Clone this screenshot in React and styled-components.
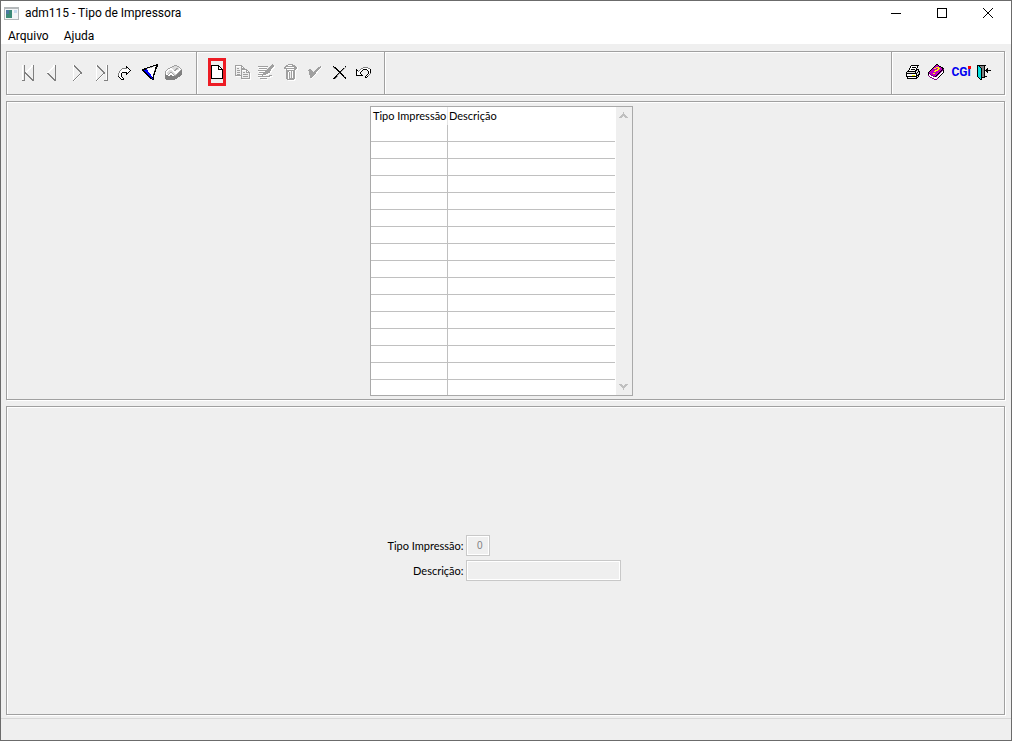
import React from "react";
import styled, { createGlobalStyle } from "styled-components";

const GlobalStyle = createGlobalStyle`
  * {
    box-sizing: border-box;
  }
  body {
    margin: 0;
    background: #efefef;
    font-family: Roboto, "Open Sans", sans-serif;
    font-size: 12px;
    color: #000;
  }
`;
const Window = styled.div`
  min-height: 100vh;
  display: flex;
  flex-direction: column;
  background: #efefef;
  border: 1px solid #6b6b6b;
`;
const TitleBar = styled.header`
  display: flex;
  align-items: center;
  height: 24px;
  padding-left: 3px;
  background: #fff;
`;
const Title = styled.h1`
  flex: 1;
  margin: 0 0 0 6px;
  font-size: 12px;
  font-weight: normal;
`;
const WindowButton = styled.button`
  display: flex;
  align-items: center;
  justify-content: center;
  width: 46px;
  height: 24px;
  padding: 0;
  border: none;
  background: none;
`;
const MenuBar = styled.nav`
  display: flex;
  gap: 1px;
  height: 19px;
  background: #fff;
`;
const MenuItem = styled.button`
  padding: 2px 7px 0;
  border: none;
  background: none;
  font: inherit;
  line-height: 18px;
`;
const Content = styled.main`
  flex: 1;
  display: flex;
  flex-direction: column;
  gap: 6px;
  padding: 7px 6px 3px 5px;
`;
const Frame = styled.section`
  border: 1px solid #a0a0a0;
  box-shadow: 1px 1px #fff, inset 1px 1px #fff;
`;
const ToolBar = styled(Frame)`
  display: flex;
  height: 44px;
`;
const ToolGroup = styled.div`
  display: flex;
  align-items: center;
  padding: 0 ${props => props.$end || 12}px 2px ${props => props.$start || 9}px;
  border-right: ${props => (props.$last ? "none" : "1px solid #a0a0a0")};
  box-shadow: inset 1px 1px #fff;
`;
const ToolSpacer = styled(ToolGroup)`
  flex: 1;
`;
const ToolButton = styled.button`
  display: flex;
  align-items: center;
  justify-content: center;
  width: 24px;
  height: 28px;
  padding: 0;
  border: none;
  background: none;
`;
const NewButton = styled(ToolButton)`
  width: 18px;
  margin: 0 3px;
  border: 3px solid #ed1c24;
`;
const CgiButton = styled(ToolButton)`
  position: relative;
  color: #0000f0;
  font: bold 12px Roboto, sans-serif;
  &::after {
    content: "";
    position: absolute;
    top: 8px;
    right: 2px;
    width: 3px;
    height: 3px;
    background: #f00;
  }
`;
const GridPanel = styled(Frame)`
  display: flex;
  justify-content: center;
  padding: 4px 8px 3px 0;
`;
const GridBox = styled.div`
  display: flex;
  border: 1px solid #a9a9a9;
  background: #fff;
`;
const Grid = styled.table`
  width: 244px;
  margin-right: 1px;
  table-layout: fixed;
  border-collapse: separate;
  border-spacing: 0;
`;
const HeadCell = styled.th`
  width: ${props => props.$width || "auto"};
  height: 18px;
  padding: 0 0 0 ${props => (props.$first ? 2 : 1)}px;
  border-right: ${props => (props.$first ? "1px solid #e5e5e5" : "none")};
  font: 11px Lato, sans-serif;
  line-height: 18px;
  text-align: left;
  white-space: nowrap;
`;
const Cell = styled.td`
  height: 17px;
  padding: 0;
  border-right: ${props => (props.$first ? "1px solid #c0c0c0" : "none")};
  border-bottom: 1px solid #c0c0c0;
  tr:last-child > & {
    height: 15px;
    border-bottom: none;
  }
`;
const ScrollBar = styled.div`
  display: flex;
  flex-direction: column;
  justify-content: space-between;
  width: 16px;
  background: #efefef;
`;
const ScrollButton = styled.button`
  height: 17px;
  padding: 0 0 0 3px;
  border: none;
  background: none;
  line-height: 0;
  text-align: left;
`;
const FormPanel = styled(Frame)`
  flex: 1;
  display: flex;
  align-items: center;
  justify-content: center;
  padding: 0 3px 6px 0;
`;
const Form = styled.form`
  display: grid;
  grid-template-columns: auto 155px;
  gap: 4px 2px;
  align-items: center;
  font: 11px Lato, sans-serif;
`;
const Label = styled.label`
  text-align: right;
`;
const Field = styled.input`
  width: ${props => props.$width || "100%"};
  height: 21px;
  padding: 0 6px;
  border: 1px solid #c8c8c8;
  box-shadow: inset 0 0 0 1px #fff;
  background: #efefef;
  color: #808080;
  font: 10px "Liberation Sans", Arial, sans-serif;
  text-align: right;
`;
const StatusBar = styled.footer`
  height: 22px;
  border-top: 1px solid #d7d7d7;
`;

const Icon = ({ children, width = 20, height = 18 }) => (
  <svg
    width={width}
    height={height}
    viewBox={`0 0 ${width} ${height}`}
    fill="none"
    shapeRendering="crispEdges"
    aria-hidden="true"
  >
    {children}
  </svg>
);

const COLORS = {
  k: "#000",
  w: "#fff",
  g: "#a0a0a0",
  d: "#808080",
  l: "#dcdcdc",
  m: "#c000c0",
  p: "#800080",
  y: "#ffff00",
  c: "#00e0e0",
  b: "#0000ff"
};

// one character per pixel, "." is transparent
const Pixels = ({ rows, x = 0, y = 0 }) =>
  rows.map((row, r) =>
    [...row].map((ch, c) =>
      COLORS[ch] ? (
        <rect
          key={`${r}-${c}`}
          x={x + c}
          y={y + r}
          width="1"
          height="1"
          fill={COLORS[ch]}
        />
      ) : null
    )
  );

const FIRST = [
  "w.d......wwd",
  "w.d......wwd",
  "w.d.....ww.d",
  "w.d....ww..d",
  "w.d...ww...d",
  "w.d..ww....d",
  "w.d.ww.....d",
  "w.ddw......d",
  "w.ddd......d",
  "w.d.dd.....d",
  "w.d..dd....d",
  "w.d...dd...d",
  "w.d....dd..d",
  "w.d.....dd.d",
  "w.d......ddd",
  "ddd.......dd"
];
const PREV = [
  "......wwd",
  "......wwd",
  ".....ww.d",
  "....ww..d",
  "...ww...d",
  "..ww....d",
  ".ww.....d",
  "ww......d",
  "dd......d",
  ".dd.....d",
  "..dd....d",
  "...dd...d",
  "....dd..d",
  ".....dd.d",
  "......ddd",
  ".......dd"
];
const NEXT = [
  "wd.......",
  "wdd......",
  "w.dd.....",
  "w..dd....",
  "w...dd...",
  "w....dd..",
  "w.....dd.",
  "w......dd",
  "w......dd",
  "w.....dw.",
  "w....dw..",
  "w...dw...",
  "w..dw....",
  "w.dw.....",
  "wdw......",
  "dw......."
];
const LAST = [
  "wd........wd",
  "wdd.......wd",
  "w.dd......wd",
  "w..dd.....wd",
  "w...dd....wd",
  "w....dd...wd",
  "w.....dd..wd",
  "w......dd.wd",
  "w......dd.wd",
  "w.....dw..wd",
  "w....dw...wd",
  "w...dw....wd",
  "w..dw.....wd",
  "w.dw......wd",
  "wdw.......wd",
  "dw......dddd"
];
const REDO = [
  "........k....",
  "........kk...",
  "....dddddwk..",
  "...dwwwwwwwk.",
  "..dwwwwwwwwwk",
  ".dwwwwwwwwwk.",
  ".dwwkkkkkwk..",
  "dwwk....kk...",
  "dwwk....k....",
  "dwwk.........",
  "kwwk.........",
  ".kwwk........",
  "..kwwk.......",
  "...kkk......."
];
const FUNNEL = [
  "..............kk",
  "...........kkkkk",
  "........kkkgwwkk",
  ".....kkkggwwwkk.",
  "..kkkgwwwwwwwkk.",
  "kkkkbwwwwwwwwk..",
  "kkbbbbwwwwwwgk..",
  ".kkbbbwwwwwwkk..",
  "..kkbbbwwwwwk...",
  "...kkbbbwwwgk...",
  "....kkbbbwwkk...",
  ".....kkbbwwk....",
  "......kkbbwk....",
  ".......kkbkk....",
  "........kkbk....",
  "..........kk...."
];
const ERASER = [
  ".........ggg.....",
  ".......gglllgg...",
  ".....gglllllllg..",
  "...ggwwllllgglwg.",
  "..gwwwwwllggllwwg",
  ".gwwlllwwggwwwwgd",
  "gwwlllllwwwwwwgdd",
  "gwlllggllwwwwgddd",
  "gwllgwwgllwwgdddd",
  "dwwgwwwwgllgddddd",
  "dddwwddwwggddddd.",
  "ddddddddddddddd..",
  "ddddddddddddd....",
  "dddddddddddd.....",
  ".ddddddddd......."
];
const NEW = [
  "kkkkkkkk....",
  "kwwwwwwkk...",
  "kwwwwwwkwk..",
  "kwwwwwwkwwk.",
  "kwwwwwwkkkkk",
  "kwwwwwwwwwwk",
  "kwwwwwwwwwwk",
  "kwwwwwwwwwwk",
  "kwwwwwwwwwwk",
  "kwwwwwwwwwwk",
  "kwwwwwwwwwwk",
  "kwwwwwwwwwwk",
  "kwwwwwwwwwwk",
  "kkkkkkkkkkkk"
];
const COPY = [
  "ggggggg.........",
  "gwwwwwgg........",
  "g.....gwg.......",
  "g.gg..gggg......",
  "g.....gggggg....",
  "g.ggg.gwwwwgg...",
  "g.....g....gwg..",
  "g.ggg.g.gg.gggg.",
  "g.....g.......gw",
  "g.ggg.g.ggggg.gw",
  "ggggggg.......gw",
  ".wwwwwg.ggggg.gw",
  "......g.......gw",
  "......gggggggggw",
  ".......wwwwwwwww"
];
const EDIT = [
  "..............g..",
  ".............ggg.",
  "gggggggggg..ggggw",
  "wwwwwwwww..ggggww",
  ".gggggggg.ggggww.",
  ".wwwwwww.ggggww..",
  "gggggggggggggw...",
  "wwwwwwwgggggww...",
  ".gggggggggggw....",
  ".wwwwgggggww.....",
  "ggggggggwww......",
  "wwwwgwww...ggg...",
  "ggggggggggggwww..",
  "wwwwwwwwwwwww....",
  "..ggggggg........",
  "...wwwwwww......."
];
const TRASH = [
  "....ggggg.....",
  "..ggwwwwggg...",
  ".ggggggggggg..",
  "ggwwwwwwwwgggw",
  "gggggggggggggw",
  ".wgwwwwwwwggww",
  "..gggggggggw..",
  "..gggwwgwggw..",
  "..ggwg.gwggw..",
  "..ggwg.gwggw..",
  "..ggwg.gwggw..",
  "..ggwg.gwggw..",
  "..ggwg.gwggw..",
  "..ggwg.gwggw..",
  "..ggwggggggw..",
  "...gggggggww..",
  "....wwwwwww..."
];
const CHECK = [
  "............g.",
  "..........gggw",
  ".........gggw.",
  ".gg.....gggw..",
  "gggg...gggw...",
  ".gggg.gggw....",
  ".gggggggww....",
  ".gggggggw.....",
  ".ggggggw......",
  "..ggggw.......",
  "..gggw........",
  "..ggw.........",
  "...w.........."
];
const CANCEL = [
  "k...........k",
  "gkk.........g",
  ".gkk......kg.",
  "...kk....kg..",
  "....kk..kg...",
  ".....kkkg....",
  "......kk.....",
  ".....kgkk....",
  "....kg..kk...",
  "...kg....kk..",
  "..kkg.....kg.",
  ".kkg.......kk",
  "kkg.........k"
];
const UNDO = [
  ".......ddddd...",
  ".....ddwwwwwdd.",
  "k...dwwkkkkwwwk",
  "kk.dwwk....kwwk",
  "kwdwwk......kwk",
  "kwwwk.......kwk",
  "kwwwk.......kwd",
  "kwwwwk.....kwd.",
  "kkkkkkk...kwd..",
  ".........kwk...",
  ".........kk...."
];
const PRINTER = [
  ".....kkkkkkkk.",
  "....kwwwwwwk..",
  "....kwkkkkwk..",
  "...kwwwwwwk...",
  "...kwkkkkwkkk.",
  "..kwwwwwwkklk.",
  ".kkkkkkkkkllkk",
  "kllllllllklklk",
  "kkkkkkkkkkkllk",
  "kwwwwwwwwwklkk",
  "kwwwwwyyywkkk.",
  "kkkkkkkkkkklk.",
  ".kwwwwwwwwkk..",
  ".kkkkkkkkkk..."
];
const BOOK = [
  "........kk......",
  ".......kmmk.....",
  "......kmmmmkk...",
  ".....kmmyyymmkk.",
  "....kmyymmyymmkk",
  "...kmmmmmyymmmkp",
  "..kmmmmyyymmmkpk",
  ".kmmmmyymmmmkpwk",
  "kmmmmmmmmmmkpwwk",
  "kpmmmyymmmkpwwk.",
  "kwpmmmmmmkpwwk..",
  "pwwppmmmkpwwk...",
  ".pwwwppkpwwk....",
  "..ppwwwwwwk.....",
  "....ppwwwp......",
  "......ppp......."
];
const EXIT = [
  "kkkkkkkkk......",
  "kckddddk.......",
  "kcckdddk.......",
  "kccckddk..k....",
  "kccckddk.kk....",
  "kccckddkkkkkkk.",
  "kccckddk.kk....",
  "kccckddk..k....",
  "kccckddk.......",
  "kccckddk.......",
  "kccckddk.......",
  "kccckddkkk.....",
  ".kcckkkk.......",
  "..kck..........",
  "...kk.........."
];

const navTools = [
  { label: "Primeiro", rows: FIRST, x: 4, y: 2 },
  { label: "Anterior", rows: PREV, x: 5, y: 2 },
  { label: "Próximo", rows: NEXT, x: 7, y: 2 },
  { label: "Último", rows: LAST, x: 6, y: 2 },
  { label: "Ir para", rows: REDO, x: 4, y: 3 },
  { label: "Filtrar", rows: FUNNEL, x: 4, y: 1 },
  { label: "Limpar filtro", rows: ERASER, x: 3, y: 2 }
];
const editTools = [
  { label: "Copiar", rows: COPY, x: 4, y: 2 },
  { label: "Alterar", rows: EDIT, x: 3, y: 1 },
  { label: "Excluir", rows: TRASH, x: 5, y: 1 },
  { label: "Confirmar", rows: CHECK, x: 5, y: 3 },
  { label: "Cancelar", rows: CANCEL, x: 6, y: 3 },
  { label: "Desfazer", rows: UNDO, x: 5, y: 4 }
];

const PixelButton = ({ label, rows, x, y }) => (
  <ToolButton aria-label={label}>
    <Icon>
      <Pixels rows={rows} x={x} y={y} />
    </Icon>
  </ToolButton>
);

const App = () => (
  <Window>
    <GlobalStyle />
    <TitleBar>
      <Icon width={15} height={13}>
        <rect x="0" y="0" width="15" height="13" fill="#b4b8ba" />
        <rect x="1" y="2" width="13" height="10" fill="#f4f6f8" />
        <rect x="2" y="3" width="6" height="8" fill="#3c8a78" />
        <rect x="2" y="3" width="3" height="4" fill="#4a78a0" />
        <rect x="10" y="3" width="3" height="3" fill="#c8dcf0" />
      </Icon>
      <Title>adm115 - Tipo de Impressora</Title>
      <WindowButton aria-label="Minimizar">
        <Icon width={10} height={10}>
          <path d="M0 5.5H10" stroke="#000" />
        </Icon>
      </WindowButton>
      <WindowButton aria-label="Maximizar">
        <Icon width={10} height={10}>
          <rect x=".5" y=".5" width="9" height="9" stroke="#000" />
        </Icon>
      </WindowButton>
      <WindowButton aria-label="Fechar">
        <svg width="10" height="10" viewBox="0 0 10 10" aria-hidden="true">
          <path d="M0 0L10 10M10 0L0 10" stroke="#000" />
        </svg>
      </WindowButton>
    </TitleBar>
    <MenuBar>
      <MenuItem>Arquivo</MenuItem>
      <MenuItem>Ajuda</MenuItem>
    </MenuBar>
    <Content>
      <ToolBar>
        <ToolGroup>
          {navTools.map(tool => (
            <PixelButton key={tool.label} {...tool} />
          ))}
        </ToolGroup>
        <ToolGroup $start={8} $end={11}>
          <NewButton aria-label="Novo">
            <Icon width={12} height={14}>
              <Pixels rows={NEW} />
            </Icon>
          </NewButton>
          {editTools.map(tool => (
            <PixelButton key={tool.label} {...tool} />
          ))}
        </ToolGroup>
        <ToolSpacer />
        <ToolGroup $start={9} $end={7} $last>
          <PixelButton label="Imprimir" rows={PRINTER} x={3} y={2} />
          <PixelButton label="Manual" rows={BOOK} x={1} y={1} />
          <CgiButton>CGi</CgiButton>
          <PixelButton label="Sair" rows={EXIT} x={2} y={2} />
        </ToolGroup>
      </ToolBar>
      <GridPanel>
        <GridBox>
          <Grid>
            <thead>
              <tr>
                <HeadCell $first $width="77px">
                  Tipo Impressão
                </HeadCell>
                <HeadCell>Descrição</HeadCell>
              </tr>
            </thead>
            <tbody>
              {Array.from({ length: 16 }, (_, i) => (
                <tr key={i}>
                  <Cell $first />
                  <Cell />
                </tr>
              ))}
            </tbody>
          </Grid>
          <ScrollBar>
            <ScrollButton aria-label="Subir">
              <Icon width={9} height={7}>
                <path d="M1 6L4.5 2L8 6" stroke="#bfbfbf" strokeWidth="2" />
              </Icon>
            </ScrollButton>
            <ScrollButton aria-label="Descer">
              <Icon width={9} height={7}>
                <path d="M1 1L4.5 5L8 1" stroke="#bfbfbf" strokeWidth="2" />
              </Icon>
            </ScrollButton>
          </ScrollBar>
        </GridBox>
      </GridPanel>
      <FormPanel>
        <Form>
          <Label htmlFor="tipo">Tipo Impressão:</Label>
          <Field id="tipo" $width="24px" defaultValue="0" disabled />
          <Label htmlFor="descricao">Descrição:</Label>
          <Field id="descricao" disabled />
        </Form>
      </FormPanel>
    </Content>
    <StatusBar />
  </Window>
);

export default App;
